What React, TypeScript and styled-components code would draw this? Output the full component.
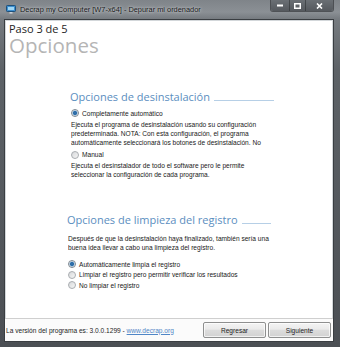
import React from 'react';
import styled, { createGlobalStyle } from 'styled-components';

const GlobalStyle = createGlobalStyle`
  html, body {
    margin: 0;
    padding: 0;
    width: 340px;
    height: 347px;
    overflow: hidden;
    background: #2b2e31;
  }
`;

export default function App() {
  return (
    <>
      <GlobalStyle />
      <Window>
        <TitleBar>
          <AppIcon />
          <TitleText>Decrap my Computer [W7-x64] - Depurar mi ordenador</TitleText>
          <CaptionGroup>
            <CaptionButton width={18}>
              <svg width="6" height="3" viewBox="0 0 6 3">
                <rect x="0" y="0.5" width="6" height="2" fill="#fff" />
              </svg>
            </CaptionButton>
            <CaptionButton width={15}>
              <svg width="7" height="6" viewBox="0 0 7 6">
                <rect x="0.75" y="0.75" width="5.5" height="4.5" fill="none" stroke="#fff" strokeWidth="1.5" />
              </svg>
            </CaptionButton>
            <CaptionButton width={27}>
              <svg width="7" height="6" viewBox="0 0 7 6">
                <path d="M1 0.5 L6 5.5 M6 0.5 L1 5.5" stroke="#fff" strokeWidth="1.6" />
              </svg>
            </CaptionButton>
          </CaptionGroup>
        </TitleBar>
        <Client>
          <Header>
            <Step>Paso 3 de 5</Step>
            <PageTitle>Opciones</PageTitle>
          </Header>
          <Body>
            <Section indent={66} top={35}>
              <SectionHeading>
                <HeadingText>Opciones de desinstalación</HeadingText>
                <HeadingRule />
              </SectionHeading>
              <Option top={4}>
                <Radio checked />
                <span>Completamente automático</span>
              </Option>
              <Description clip={29}>
                Ejecuta el programa de desinstalación usando su configuración
                <br />
                predeterminada. NOTA: Con esta configuración, el programa
                <br />
                automáticamente seleccionará los botones de desinstalación. No
                <br />
                podrá elegir ninguna de las opciones del desinstalador.
              </Description>
              <Option top={1}>
                <Radio />
                <span>Manual</span>
              </Option>
              <Description>
                Ejecuta el desinstalador de todo el software pero le permite
                <br />
                seleccionar la configuración de cada programa.
              </Description>
            </Section>
            <Section indent={63} top={34}>
              <SectionHeading>
                <HeadingText>Opciones de limpieza del registro</HeadingText>
                <HeadingRule />
              </SectionHeading>
              <Description top={7}>
                Después de que la desinstalación haya finalizado, también sería una
                <br />
                buena idea llevar a cabo una limpieza del registro.
              </Description>
              <Option top={7}>
                <Radio checked />
                <span>Automáticamente limpia el registro</span>
              </Option>
              <Option top={0}>
                <Radio />
                <span>Limpiar el registro pero permitir verificar los resultados</span>
              </Option>
              <Option top={0}>
                <Radio />
                <span>No limpiar el registro</span>
              </Option>
            </Section>
          </Body>
          <Footer>
            <Version>
              La versión del programa es: 3.0.0.1299 - <Link>www.decrap.org</Link>
            </Version>
            <Buttons>
              <PushButton>Regresar</PushButton>
              <PushButton>Siguiente</PushButton>
            </Buttons>
          </Footer>
        </Client>
      </Window>
    </>
  );
}

const AppIcon = () => (
  <svg width="10" height="9" viewBox="0 0 10 9" style={{ marginRight: 4, flexShrink: 0 }}>
    <rect x="0.5" y="0.5" width="9" height="6" rx="0.8" fill="#3d8fd0" stroke="#1c4f7a" />
    <rect x="2" y="2" width="6" height="3" fill="#9fd6f4" />
    <rect x="3.5" y="7" width="3" height="1.6" fill="#c9d0d6" />
  </svg>
);

const Window = styled.div`
  width: 340px;
  height: 347px;
  box-sizing: border-box;
  display: flex;
  flex-direction: column;
  padding: 0 6px 5px 4px;
  background: linear-gradient(#7f8489 0, #8b9095 12px, #767b80 19px, #5d6267 70px, #4b4f54);
  font-family: 'Liberation Sans', Arial, sans-serif;
`;

const TitleBar = styled.div`
  height: 19px;
  display: flex;
  align-items: center;
  padding-left: 2px;
  position: relative;
`;

const TitleText = styled.span`
  font-size: 7.4px;
  color: #16181a;
  text-shadow: 0 0 4px rgba(255, 255, 255, 0.6), 0 0 2px rgba(255, 255, 255, 0.5);
  white-space: nowrap;
  margin-top: -1px;
`;

const CaptionGroup = styled.div`
  position: absolute;
  top: 0;
  right: 0;
  display: flex;
  border: 1px solid rgba(40, 43, 46, 0.6);
  border-top: none;
  border-radius: 0 0 3px 3px;
  overflow: hidden;
`;

const CaptionButton = styled.div<{ width: number }>`
  width: ${(p) => p.width}px;
  height: 11px;
  display: flex;
  align-items: center;
  justify-content: center;
  background: linear-gradient(#6a6f74, #55595e);
  & + & {
    border-left: 1px solid rgba(40, 43, 46, 0.55);
  }
`;

const Client = styled.div`
  flex: 1;
  display: flex;
  flex-direction: column;
  background: #ffffff;
  border: 1px solid #3a3e42;
  box-shadow: inset 0 0 0 1px #d3d7da;
`;

const Header = styled.div`
  padding: 2px 0 0 4px;
  font-family: 'Open Sans', 'DejaVu Sans', sans-serif;
`;

const Step = styled.div`
  font-size: 11px;
  line-height: 13px;
  color: #1e1e1e;
`;

const PageTitle = styled.div`
  font-size: 20.5px;
  line-height: 20px;
  color: #b5b5b5;
`;

const Body = styled.div`
  flex: 1;
`;

const Section = styled.div<{ indent: number; top: number }>`
  margin: ${(p) => p.top}px 0 0 ${(p) => p.indent}px;
  width: 203px;
  display: flex;
  flex-direction: column;
`;

const SectionHeading = styled.div`
  display: flex;
  align-items: flex-end;
  margin-left: -1px;
`;

const HeadingText = styled.span`
  font-family: 'Open Sans', 'DejaVu Sans', sans-serif;
  font-size: 11px;
  line-height: 14px;
  color: #5b8ec0;
  white-space: nowrap;
`;

const HeadingRule = styled.div`
  flex: 1;
  height: 1px;
  margin: 0 0 3px 4px;
  background: #b6cfe6;
`;

const Option = styled.div<{ top: number }>`
  display: flex;
  align-items: center;
  gap: 3px;
  height: 10.5px;
  margin-top: ${(p) => p.top}px;
  font-size: 6.6px;
  color: #202020;
  white-space: nowrap;
`;

const Radio = styled.span<{ checked?: boolean }>`
  width: 6px;
  height: 6px;
  flex-shrink: 0;
  border-radius: 50%;
  border: 1px solid ${(p) => (p.checked ? '#7d8790' : '#a9adb1')};
  background: ${(p) =>
    p.checked
      ? 'radial-gradient(circle, #2f6ea8 0 1.6px, #7fb0da 2.2px, #e9eef2 2.8px)'
      : 'linear-gradient(135deg, #d6d8da, #f6f6f6)'};
`;

const Description = styled.div<{ clip?: number; top?: number }>`
  margin-top: ${(p) => p.top ?? 1}px;
  font-size: 6.6px;
  line-height: 9px;
  color: #202020;
  white-space: nowrap;
  height: ${(p) => (p.clip ? `${p.clip}px` : 'auto')};
  overflow: hidden;
`;

const Footer = styled.div`
  height: 22px;
  display: flex;
  align-items: center;
  justify-content: space-between;
  padding: 0 2px 0 1px;
  border-top: 1px solid #cfcfcf;
  background: #fbfbfb;
`;

const Version = styled.span`
  font-size: 6.6px;
  color: #252525;
  white-space: nowrap;
`;

const Link = styled.span`
  color: #4f86c6;
  text-decoration: underline;
`;

const Buttons = styled.div`
  display: flex;
  gap: 2px;
`;

const PushButton = styled.button`
  width: 63px;
  height: 16px;
  padding: 0;
  border: 1px solid #8e8f8f;
  border-radius: 2px;
  background: linear-gradient(#f4f4f4, #eaeaea 45%, #dcdcdc 50%, #d2d2d2);
  box-shadow: inset 0 0 0 1px rgba(255, 255, 255, 0.7);
  font-family: 'Liberation Sans', Arial, sans-serif;
  font-size: 6.6px;
  color: #1e1e1e;
`;
